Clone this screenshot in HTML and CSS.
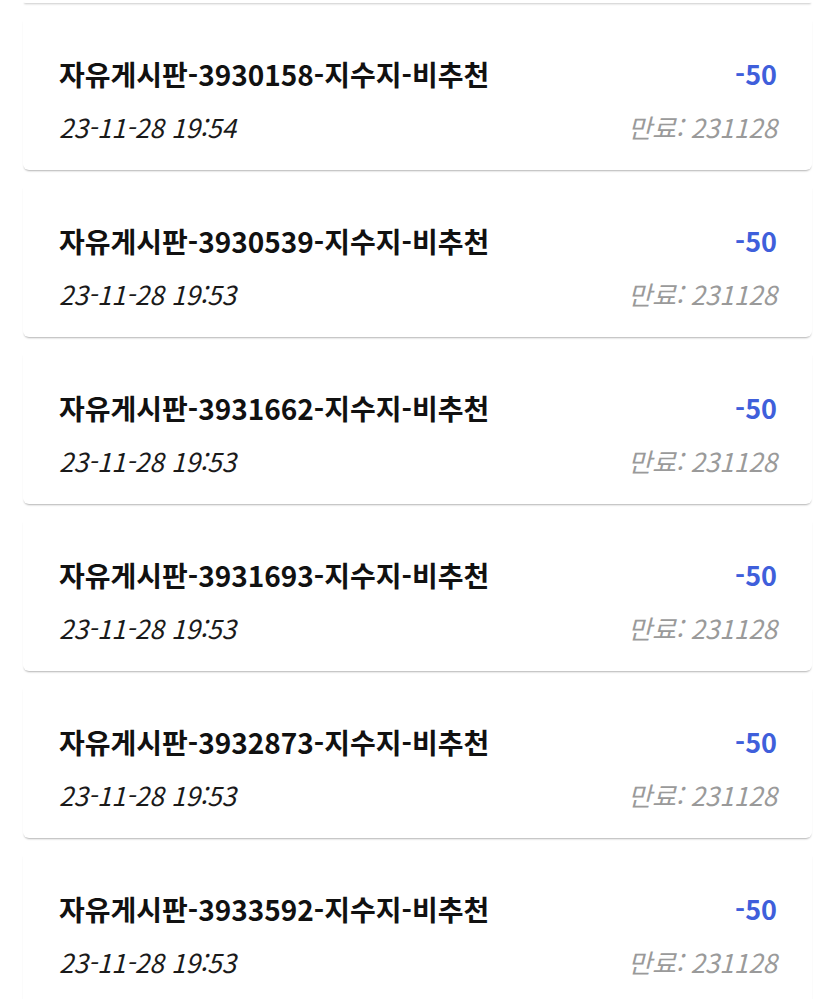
FILE: index.html
```html
<!DOCTYPE html>
<html lang="ko">
<head>
    <meta charset="UTF-8">
    <meta name="viewport" content="width=device-width, initial-scale=1.0">
    <title>포인트 내역</title>
    <link rel="stylesheet" href="styles.css">
</head>
<body>
    <div class="point-list">
        <div class="point-card point-card-tail"></div>
        <div class="point-card">
            <div class="point-row">
                <div class="point-title">자유게시판-3930158-지수지-비추천</div>
                <div class="point-amount">-50</div>
            </div>
            <div class="point-row">
                <div class="point-date">23-11-28 19:54</div>
                <div class="point-expire">만료: 231128</div>
            </div>
        </div>
        <div class="point-card">
            <div class="point-row">
                <div class="point-title">자유게시판-3930539-지수지-비추천</div>
                <div class="point-amount">-50</div>
            </div>
            <div class="point-row">
                <div class="point-date">23-11-28 19:53</div>
                <div class="point-expire">만료: 231128</div>
            </div>
        </div>
        <div class="point-card">
            <div class="point-row">
                <div class="point-title">자유게시판-3931662-지수지-비추천</div>
                <div class="point-amount">-50</div>
            </div>
            <div class="point-row">
                <div class="point-date">23-11-28 19:53</div>
                <div class="point-expire">만료: 231128</div>
            </div>
        </div>
        <div class="point-card">
            <div class="point-row">
                <div class="point-title">자유게시판-3931693-지수지-비추천</div>
                <div class="point-amount">-50</div>
            </div>
            <div class="point-row">
                <div class="point-date">23-11-28 19:53</div>
                <div class="point-expire">만료: 231128</div>
            </div>
        </div>
        <div class="point-card">
            <div class="point-row">
                <div class="point-title">자유게시판-3932873-지수지-비추천</div>
                <div class="point-amount">-50</div>
            </div>
            <div class="point-row">
                <div class="point-date">23-11-28 19:53</div>
                <div class="point-expire">만료: 231128</div>
            </div>
        </div>
        <div class="point-card">
            <div class="point-row">
                <div class="point-title">자유게시판-3933592-지수지-비추천</div>
                <div class="point-amount">-50</div>
            </div>
            <div class="point-row">
                <div class="point-date">23-11-28 19:53</div>
                <div class="point-expire">만료: 231128</div>
            </div>
        </div>
    </div>
</body>
</html>
```

FILE: styles.css
```css
body {
    margin: 0;
    padding: 0;
    background-color: #FFFFFF;
    font-family: 'Noto Sans CJK KR', 'Noto Sans', sans-serif;
    color: #111111;
    overflow: hidden;
}
.point-list {
    display: flex;
    flex-direction: column;
    padding: 0 23px;
}
.point-card {
    background-color: #FFFFFF;
    border-radius: 0 0 6px 6px;
    box-shadow: 0 2px 2px -1px rgba(0, 0, 0, 0.3);
    padding: 35px 35px 26px 36px;
    margin-bottom: 16px;
}
.point-card-tail {
    height: 3px;
    padding: 0;
}
.point-row {
    display: flex;
    justify-content: space-between;
    align-items: center;
}
.point-row + .point-row {
    margin-top: 16px;
}
.point-title {
    font-size: 28px;
    font-weight: bold;
    line-height: 40px;
}
.point-amount {
    font-size: 27px;
    font-weight: bold;
    line-height: 40px;
    color: #3F5FDB;
}
.point-date {
    font-size: 26px;
    font-style: italic;
    line-height: 34px;
    color: #1A1A1A;
}
.point-expire {
    font-size: 26px;
    font-style: italic;
    line-height: 34px;
    color: #9A9A9A;
}
```
